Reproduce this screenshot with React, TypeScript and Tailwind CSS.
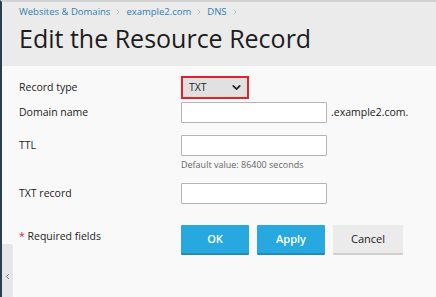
import { ChevronDown, ChevronLeft, ChevronRight } from 'lucide-react';

const crumbs = ['Websites & Domains', 'example2.com', 'DNS'];

const Row = ({ label, children, className = '' }: { label: React.ReactNode; children: React.ReactNode; className?: string }) => (
  <div className={`flex items-center ${className}`}>
    <div className="w-[162px] shrink-0 text-[10.5px] text-[#222]">{label}</div>
    {children}
  </div>
);

const TextInput = () => (
  <input className="w-[146px] h-[21px] bg-white border border-[#b4b4b4] rounded-[1px] outline-none" />
);

const App = () => {
  return (
    <div
      className="w-[436px] h-[297px] overflow-hidden relative flex flex-col bg-[#f9f9f9] border-l-2 border-t-2 border-l-[#2d3d4d] border-t-[#d2d2d2]"
      style={{ fontFamily: '"Open Sans", "Liberation Sans", sans-serif' }}
    >
      <header className="bg-[#ebebeb] h-[64px] pl-[17px] pt-[2px] shrink-0">
        <nav className="flex items-center gap-[4px] text-[9.5px] text-[#2c80b4] leading-[16px]">
          {crumbs.map((c) => (
            <span key={c} className="flex items-center gap-[4px]">
              <span>{c}</span>
              <ChevronRight size={8} strokeWidth={2} className="text-[#a8a8a8]" />
            </span>
          ))}
        </nav>
        <h1 className="text-[25px] leading-[32px] mt-[2px] text-[#1c1c1c]">Edit the Resource Record</h1>
      </header>

      <main className="pl-[17px] pt-[10px]">
        <Row label="Record type">
          <div className="w-[68px] h-[23px] border-2 border-[#e3202c] bg-[#e1e1e1] flex items-center justify-between pl-[6px] pr-[4px]">
            <span className="text-[10.5px] text-[#222]">TXT</span>
            <ChevronDown size={13} strokeWidth={3.2} className="text-[#222]" />
          </div>
        </Row>

        <Row label="Domain name" className="mt-[3px]">
          <TextInput />
          <span className="ml-[4px] text-[10.5px] text-[#222]">.example2.com.</span>
        </Row>

        <Row label="TTL" className="mt-[12px]">
          <TextInput />
        </Row>
        <div className="pl-[162px] text-[9px] text-[#666] mt-[2px] leading-[14px]">Default value: 86400 seconds</div>

        <Row label="TXT record" className="mt-[11px]">
          <TextInput />
        </Row>

        <div className="flex items-start mt-[21px]">
          <div className="w-[162px] shrink-0 text-[10.5px] text-[#222] pt-[4px]">
            <span className="text-[#d0213a]">*</span> Required fields
          </div>
          <div className="flex gap-[8px]">
            <button className="w-[68px] h-[30px] bg-[#27a9df] border-b-2 border-[#1d8ebe] rounded-[1px] text-white text-[11px] font-semibold">
              OK
            </button>
            <button className="w-[68px] h-[30px] bg-[#27a9df] border-b-2 border-[#1d8ebe] rounded-[1px] text-white text-[11px] font-semibold">
              Apply
            </button>
            <button className="w-[70px] h-[30px] bg-[#ebebeb] border-b-2 border-[#cfcfcf] rounded-[1px] text-[#222] text-[11px]">
              Cancel
            </button>
          </div>
        </div>
      </main>

      <div className="absolute left-0 top-[242px] w-[11px] h-[60px] bg-[#e6e6e6] rounded-tr-[2px] flex items-start justify-center pt-[28px]">
        <ChevronLeft size={9} strokeWidth={2.5} className="text-[#777]" />
      </div>
    </div>
  );
};

export default App;
